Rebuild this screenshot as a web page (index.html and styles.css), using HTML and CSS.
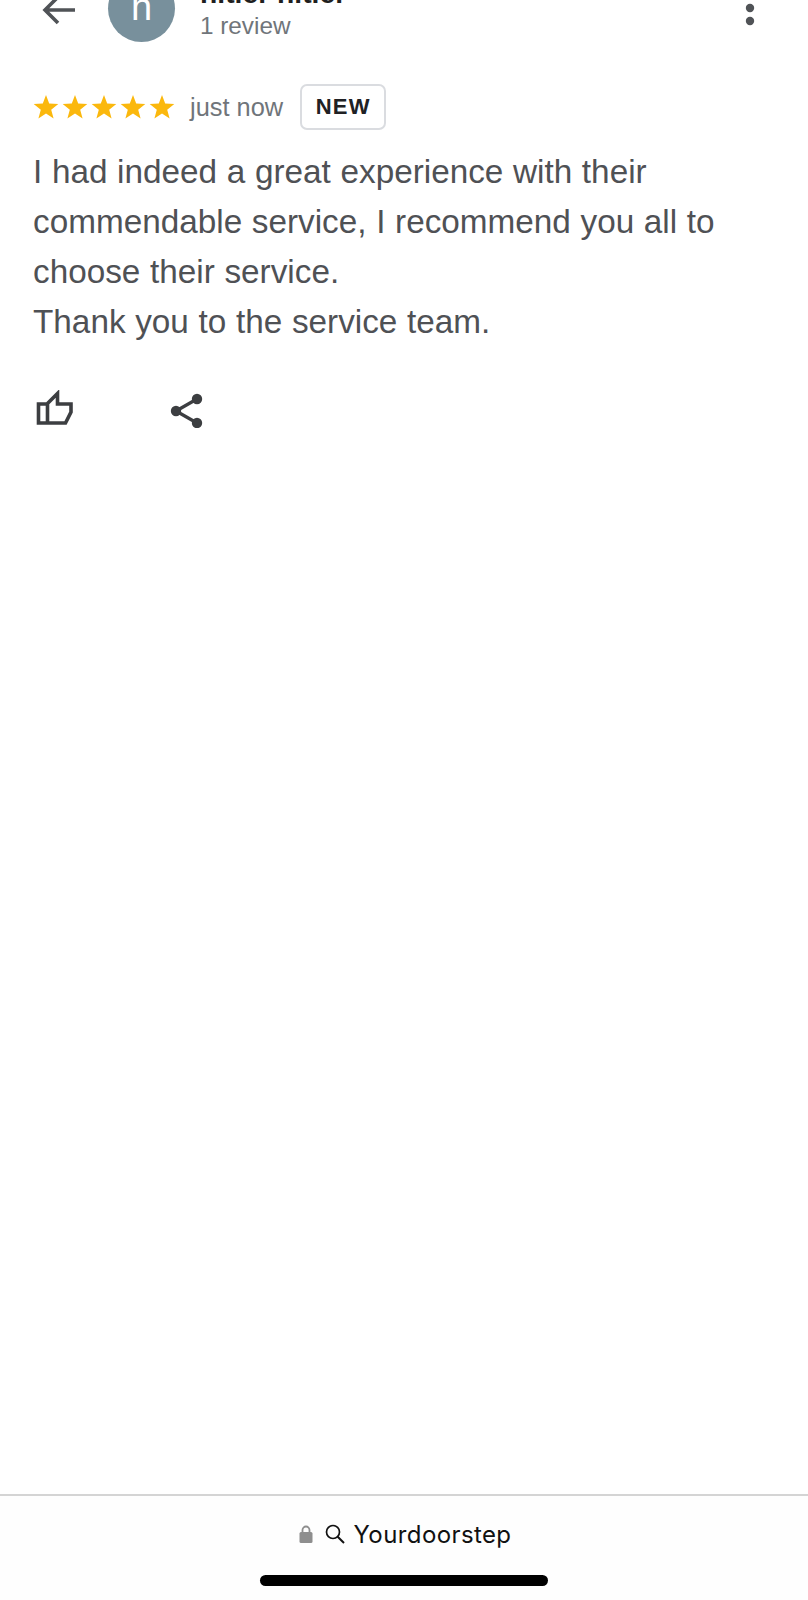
FILE: index.html
```html
<!DOCTYPE html>
<html lang="en">
<head>
<meta charset="utf-8">
<title>Review</title>
<link rel="stylesheet" href="styles.css">
</head>
<body>
<div class="page">
  <main class="main">
    <header class="header">
      <svg class="back" viewBox="0 0 36 30" width="36" height="30"><path d="M34 15H4M17 2 4 15l13 13" fill="none" stroke="#505357" stroke-width="3.6"/></svg>
      <div class="avatar">h</div>
      <div class="who">
        <div class="name">hitler hitler</div>
        <div class="count">1 review</div>
      </div>
      <svg class="more" viewBox="0 0 10 50" width="10" height="50"><circle cx="5" cy="8" r="4.2" fill="#505357"/><circle cx="5" cy="21" r="4.2" fill="#505357"/><circle cx="5" cy="34" r="4.2" fill="#505357"/></svg>
    </header>
    <div class="meta">
      <div class="stars">
        <svg viewBox="0 0 26 24" width="26" height="24"><path d="M13 0l3.2 8.6 9.1.4-7.1 5.700 2.400 8.800L13 18.500l-7.600 5 2.400-8.800L.7 9l9.100-.4z" fill="#fbb80d"/></svg>
        <svg viewBox="0 0 26 24" width="26" height="24"><path d="M13 0l3.2 8.6 9.1.4-7.1 5.700 2.400 8.800L13 18.500l-7.600 5 2.400-8.800L.7 9l9.100-.4z" fill="#fbb80d"/></svg>
        <svg viewBox="0 0 26 24" width="26" height="24"><path d="M13 0l3.2 8.6 9.1.4-7.1 5.700 2.400 8.800L13 18.500l-7.600 5 2.400-8.800L.7 9l9.100-.4z" fill="#fbb80d"/></svg>
        <svg viewBox="0 0 26 24" width="26" height="24"><path d="M13 0l3.2 8.6 9.1.4-7.1 5.700 2.400 8.800L13 18.500l-7.600 5 2.400-8.800L.7 9l9.100-.4z" fill="#fbb80d"/></svg>
        <svg viewBox="0 0 26 24" width="26" height="24"><path d="M13 0l3.2 8.6 9.1.4-7.1 5.700 2.400 8.800L13 18.500l-7.600 5 2.400-8.800L.7 9l9.100-.4z" fill="#fbb80d"/></svg>
      </div>
      <span class="time">just now</span>
      <span class="badge">NEW</span>
    </div>
    <p class="text">I had indeed a great experience with their commendable service, I recommend you all to choose their service.<br>Thank you to the service team.</p>
    <div class="actions">
      <svg viewBox="0 0 38 38" width="38" height="38"><path d="M11.500 13.500 21.500 3.500V14H35V22L29.500 33H2.500V14H11.500V33" fill="none" stroke="#3c3e41" stroke-width="3.600"/></svg>
      <svg viewBox="0 0 34 38" width="34" height="38"><path d="M6 21 27 9M6 21l21 12" stroke="#3c3e41" stroke-width="3.200" fill="none"/><circle cx="6" cy="21" r="5.200" fill="#3c3e41"/><circle cx="27" cy="9" r="5.200" fill="#3c3e41"/><circle cx="27" cy="33" r="5.200" fill="#3c3e41"/></svg>
    </div>
  </main>
  <footer class="footer">
    <div class="address">
      <svg viewBox="0 0 14 18" width="14" height="18"><path d="M3.500 8V5a3.500 3.500 0 0 1 7 0v3" fill="none" stroke="#8e8e8e" stroke-width="1.800"/><rect x="0.500" y="7" width="13" height="11" rx="1.500" fill="#8e8e8e"/></svg>
      <svg class="glass" viewBox="0 0 20 20" width="20" height="20"><circle cx="8" cy="8" r="6.500" fill="none" stroke="#111" stroke-width="1.700"/><path d="M12.700 12.700 19 19" stroke="#111" stroke-width="2"/></svg>
      <span class="url">Yourdoorstep</span>
    </div>
    <div class="home"></div>
  </footer>
</div>
</body>
</html>
```

FILE: styles.css
```css
* { box-sizing: border-box; }
html, body { margin: 0; padding: 0; background: #fff; }
.page {
  width: 808px;
  height: 1600px;
  overflow: hidden;
  display: flex;
  flex-direction: column;
  font-family: "Liberation Sans", Arial, sans-serif;
}
.main { flex: 1; }
.header {
  display: flex;
  align-items: flex-start;
  height: 109px;
  margin-top: -25px;
  padding-left: 41px;
}
.back { margin-top: 20px; flex: none; }
.avatar {
  width: 67px;
  height: 67px;
  margin-left: 31px;
  flex: none;
  border-radius: 50%;
  background: #78909c;
  color: #fff;
  font-size: 38px;
  line-height: 65px;
  text-align: center;
}
.who { margin-left: 25px; flex: 1; }
.name {
  font-size: 28.300px;
  font-weight: 700;
  line-height: 30px;
  color: #1f1f1f;
  margin-top: 3px;
}
.count {
  font-size: 24.300px;
  line-height: 30px;
  color: #70757a;
  margin-top: 3px;
}
.more { margin-right: 53px; margin-top: 12px; flex: none; }
.meta {
  display: flex;
  align-items: center;
  height: 46px;
  padding-left: 33px;
}
.stars { display: flex; gap: 3px; }
.stars svg { display: block; }
.time {
  margin-left: 15px;
  font-size: 25.400px;
  color: #70757a;
}
.badge {
  margin-left: 17px;
  width: 86px;
  height: 46px;
  display: flex;
  align-items: center;
  justify-content: center;
  border: 2px solid #dadce0;
  border-radius: 7px;
  font-size: 22px;
  font-weight: 700;
  letter-spacing: 1.200px;
  color: #202124;
}
.text {
  margin: 17px 0 0;
  padding: 0 60px 0 33px;
  font-size: 33.300px;
  word-spacing: 0.400px;
  line-height: 50px;
  color: #4f5155;
}
.actions {
  display: flex;
  align-items: flex-start;
  gap: 96px;
  padding-left: 36px;
  margin-top: 43px;
}
.actions svg { display: block; }
.footer {
  height: 106px;
  border-top: 2px solid #d4d4d4;
  background: #fefefe;
  display: flex;
  flex-direction: column;
  align-items: center;
}
.address {
  display: flex;
  align-items: center;
  margin-top: 22px;
  padding-left: 2px;
  height: 32px;
}
.glass { margin-left: 12px; }
.url {
  margin-left: 9px;
  font-size: 24px;
  letter-spacing: 0.400px;
  color: #111;
  font-family: Inter, "Liberation Sans", sans-serif;
  font-weight: 400;
}
.home {
  margin-top: 25px;
  width: 288px;
  height: 11px;
  border-radius: 6px;
  background: #000;
}
```
